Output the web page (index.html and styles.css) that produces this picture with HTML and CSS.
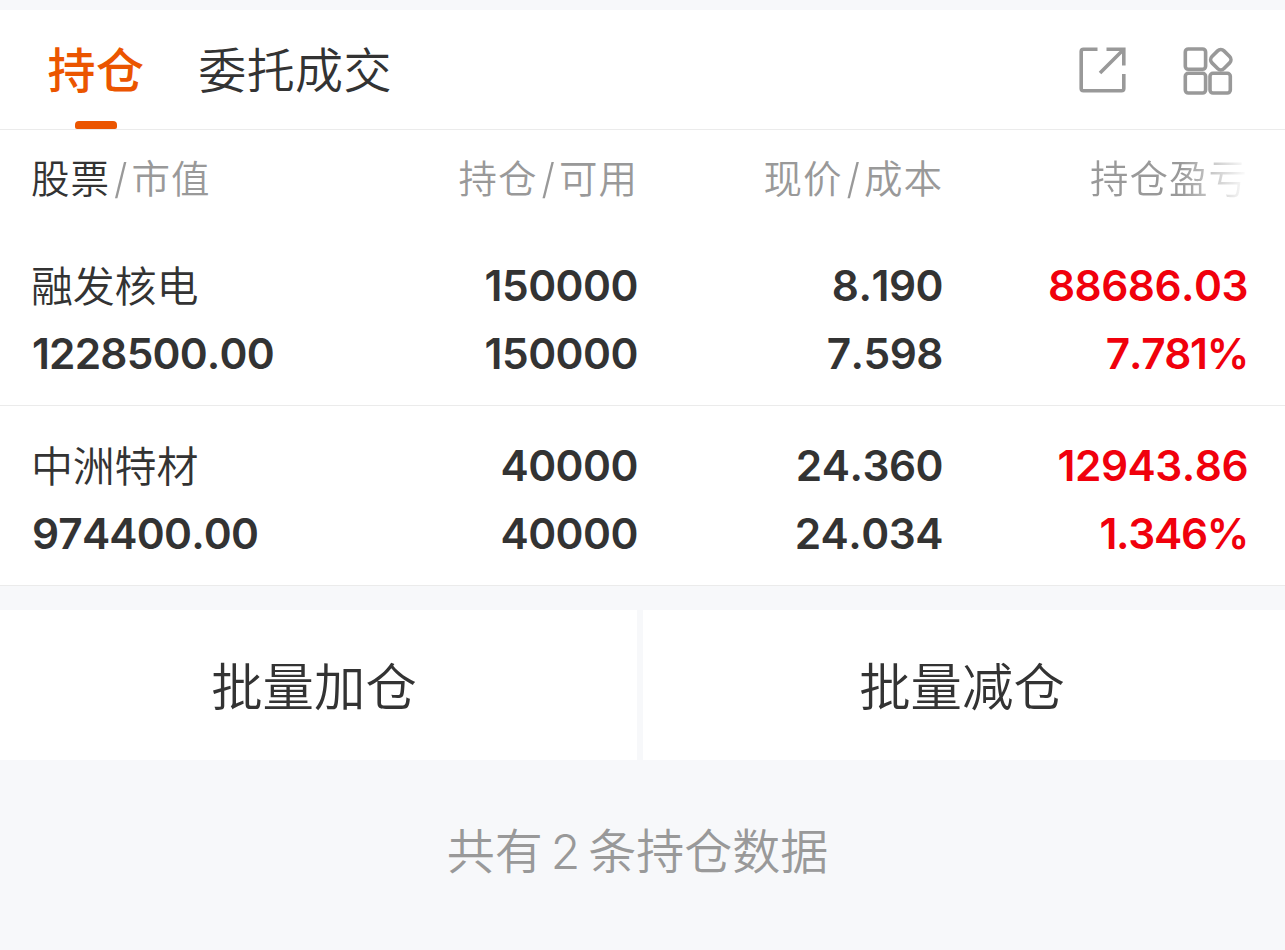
FILE: index.html
```
<!DOCTYPE html>
<html lang="zh-CN">
<head>
    <meta charset="UTF-8">
    <meta name="viewport" content="width=device-width, initial-scale=1.0">
    <title>持仓</title>
    <link rel="stylesheet" href="styles.css">
</head>
<body>
    <header class="tabs">
        <div class="tab active">持仓</div>
        <div class="tab">委托成交</div>
        <div class="tools">
            <svg class="icon" width="50" height="50" viewBox="0 0 50 50">
                <path d="M20.5 3.2H6.5Q4.2 3.2 4.2 5.5V42.5Q4.2 44.8 6.5 44.8H44.5Q46.8 44.8 46.8 42.5V28M29.5 3.2H46.8V19.5M46.3 3.7L23 27"/>
            </svg>
            <svg class="icon" width="50" height="50" viewBox="0 0 50 50">
                <rect x="2.3" y="3" width="20.3" height="20.3" rx="3"/>
                <rect x="2.3" y="27.3" width="20.3" height="19.7" rx="3"/>
                <rect x="27" y="27.3" width="20.3" height="19.7" rx="3"/>
                <rect x="29.3" y="5.2" width="17" height="17" rx="4.5" transform="rotate(45 37.8 13.7)"/>
            </svg>
        </div>
    </header>

    <div class="row head">
        <div><b>股票</b><i>/</i>市值</div>
        <div>持仓<i>/</i>可用</div>
        <div>现价<i>/</i>成本</div>
        <div class="fade">持仓盈亏</div>
    </div>
    <div class="row">
        <div><span class="name">融发核电</span><span class="value">1228500.00</span></div>
        <div><span>150000</span><span>150000</span></div>
        <div><span>8.190</span><span>7.598</span></div>
        <div class="red"><span>88686.03</span><span class="rate">7.781%</span></div>
    </div>
    <div class="row">
        <div><span class="name">中洲特材</span><span class="value">974400.00</span></div>
        <div><span>40000</span><span>40000</span></div>
        <div><span>24.360</span><span>24.034</span></div>
        <div class="red"><span>12943.86</span><span class="rate">1.346%</span></div>
    </div>

    <div class="actions">
        <button>批量加仓</button>
        <button>批量减仓</button>
    </div>
    <p class="total">共有<span>2</span>条持仓数据</p>
</body>
</html>
```
FILE: styles.css
```
* {
    box-sizing: border-box;
    margin: 0;
    padding: 0;
}
body {
    padding-top: 10px;
    background: #f7f8fa;
    color: #333;
    font-family: Inter, "Noto Sans CJK SC", sans-serif;
}
.tabs {
    display: flex;
    height: 120px;
    padding: 0 52px 0 47.5px;
    background: #fff;
    border-bottom: 1px solid #ebebeb;
}
.tab {
    position: relative;
    margin-right: 54px;
    font-size: 48px;
    font-weight: 350;
    line-height: 122px;
    letter-spacing: 0.4px;
}
.tab.active {
    color: #eb5500;
    font-weight: 500;
}
.tab.active::after {
    content: "";
    position: absolute;
    left: 27px;
    bottom: 0;
    width: 42px;
    height: 8px;
    border-radius: 4px 4px 2px 2px;
    background: #eb5500;
}
.tools {
    display: flex;
    gap: 56px;
    margin-left: auto;
    padding-top: 36px;
}
.icon {
    fill: none;
    stroke: #999;
    stroke-width: 3.6;
}
.row {
    display: grid;
    grid-template-columns: 332px 274px 305px 305px;
    height: 180px;
    padding: 26px 37px 0 32px;
    background: #fff;
    border-bottom: 1px solid #ebebeb;
    font-size: 42.4px;
    font-weight: 570;
    font-kerning: none;
    line-height: 68px;
    letter-spacing: -0.5px;
    text-align: right;
}
.row div:first-child {
    text-align: left;
}
.row span {
    display: block;
}
.row .name {
    height: 68px;
    margin-left: -1px;
    padding-top: 1px;
    font-size: 42px;
    font-weight: 350;
    letter-spacing: -0.2px;
}
.row .value {
    letter-spacing: -0.8px;
}
.row .red {
    color: #f0000c;
}
.row .rate {
    letter-spacing: -1.3px;
}
.row.head {
    height: 96px;
    padding-top: 0;
    border: none;
    color: #999;
    font-size: 38.5px;
    font-weight: 350;
    line-height: 98px;
    letter-spacing: 1px;
}
.row.head div:first-child {
    margin-left: -1px;
}
.head b {
    color: #333;
    font-weight: 350;
}
.head i {
    display: inline-block;
    margin: 0 3px 0 4px;
    font-style: normal;
    transform: scaleY(1.08);
}
.head .fade {
    background: linear-gradient(to right, #999 78%, #fff 100%);
    background-clip: text;
    -webkit-background-clip: text;
    color: transparent;
}
.actions {
    display: flex;
    gap: 6px;
    margin: 24px 0 0;
}
.actions button {
    width: 637px;
    height: 150px;
    padding: 0 9px 2px 0;
    border: none;
    background: #fff;
    color: #333;
    font: 350 51.4px/148px "Noto Sans CJK SC", sans-serif;
}
.actions button:last-child {
    flex: 1;
    padding-right: 4px;
}
.total {
    padding: 47px 10px 0 0;
    color: #999;
    font-size: 48px;
    font-weight: 350;
    line-height: 90px;
    text-align: center;
}
.total span {
    margin: 0 8px;
}
```
